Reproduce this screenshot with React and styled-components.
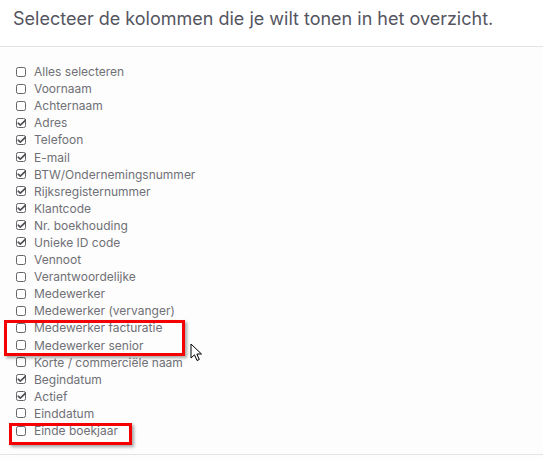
import React from "react";
import styled, { createGlobalStyle } from "styled-components";

const Global = createGlobalStyle`
  html, body { margin: 0; padding: 0; background: #fdfdfd; }
  body { font-family: Inter, "Noto Sans", sans-serif; }
`;

const Page = styled.div`
  position: relative;
  width: 543px;
  height: 459px;
  overflow: hidden;
  background: #fdfdfd;
`;

const Header = styled.div`
  height: 47px;
  display: flex;
  align-items: center;
  padding: 0 13px 9px;
  box-sizing: border-box;
  background: #fff;
  border-bottom: 1px solid #e4e4e6;
  font-size: 18px;
  color: #55555f;
`;

const List = styled.div`
  padding: 16px 0 0 16px;
  height: 408px;
  box-sizing: border-box;
  border-bottom: 1px solid #e4e4e6;
  display: flex;
  flex-direction: column;
`;

const Row = styled.div`
  height: 17.1px;
  display: flex;
  align-items: center;
  gap: 8px;
  font-size: 12px;
  color: #707076;
  white-space: nowrap;
`;

const Box = styled.svg`
  flex: none;
  width: 10px;
  height: 10px;
`;

const Mark = styled.div`
  position: absolute;
  left: ${(p) => p.x}px;
  top: ${(p) => p.y}px;
  width: ${(p) => p.w}px;
  height: ${(p) => p.h}px;
  box-sizing: border-box;
  border: 3.5px solid #f50000;
  box-shadow: 2px 2px 3px rgba(0, 0, 0, 0.35);
`;

const Cursor = styled.svg`
  position: absolute;
  left: 190px;
  top: 343px;
  width: 14px;
  height: 20px;
`;

const Check = ({ on }) => (
  <Box viewBox="0 0 10 10">
    <rect x="0.5" y="0.5" width="9" height="9" rx="1.8" fill="#fff" stroke="#646469" strokeWidth="1" />
    {on && (
      <path d="M2.2 5.2 L4.3 7.2 L9.6 2.2" fill="none" stroke="#4f4f55" strokeWidth="1.6" strokeLinecap="round" strokeLinejoin="round" />
    )}
  </Box>
);

const items = [
  ["Alles selecteren", false],
  ["Voornaam", false],
  ["Achternaam", false],
  ["Adres", true],
  ["Telefoon", true],
  ["E-mail", true],
  ["BTW/Ondernemingsnummer", true],
  ["Rijksregisternummer", true],
  ["Klantcode", true],
  ["Nr. boekhouding", true],
  ["Unieke ID code", true],
  ["Vennoot", false],
  ["Verantwoordelijke", false],
  ["Medewerker", false],
  ["Medewerker (vervanger)", false],
  ["Medewerker facturatie", false],
  ["Medewerker senior", false],
  ["Korte / commerciële naam", false],
  ["Begindatum", true],
  ["Actief", true],
  ["Einddatum", false],
  ["Einde boekjaar", false],
];

export default function App() {
  return (
    <Page>
      <Global />
      <Header>Selecteer de kolommen die je wilt tonen in het overzicht.</Header>
      <List>
        {items.map(([label, on]) => (
          <Row key={label}>
            <Check on={on} />
            <span>{label}</span>
          </Row>
        ))}
      </List>
      <Mark x={4} y={320} w={181} h={36} />
      <Mark x={9} y={423} w={123} h={22} />
      <Cursor viewBox="0 0 14 20">
        <path d="M1 1 L1 15 L4.5 11.8 L7 17.5 L9.3 16.5 L6.9 11 L11.5 11 Z" fill="#fff" stroke="#000" strokeWidth="1" strokeLinejoin="miter" />
      </Cursor>
    </Page>
  );
}
